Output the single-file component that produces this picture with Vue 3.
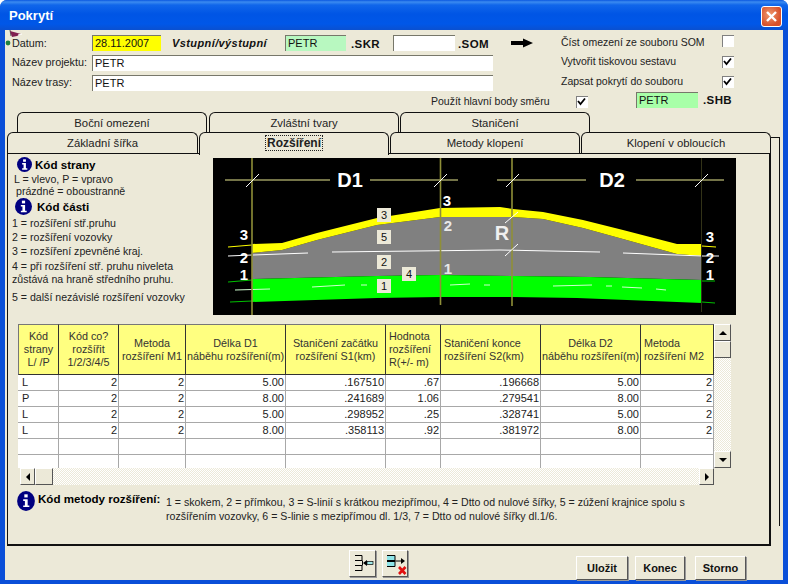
<script setup>
const headers = [
  { lines: ['Kód', 'strany', 'L/ /P'], width: 41 },
  { lines: ['Kód co?', 'rozšířit', '1/2/3/4/5'], width: 60 },
  { lines: ['Metoda', 'rozšíření M1'], width: 67 },
  { lines: ['Délka D1', 'náběhu rozšíření(m)'], width: 100 },
  { lines: ['Staničení začátku', 'rozšíření S1(km)'], width: 100 },
  { lines: ['Hodnota', 'rozšíření', 'R(+/- m)'], width: 55, left: true },
  { lines: ['Staničení konce', 'rozšíření S2(km)'], width: 100, left: true },
  { lines: ['Délka D2', 'náběhu rozšíření(m)'], width: 100 },
  { lines: ['Metoda', 'rozšíření M2'], width: 73, left: true },
]
const rows = [
  ['L', '2', '2', '5.00', '.167510', '.67', '.196668', '5.00', '2'],
  ['P', '2', '2', '8.00', '.241689', '1.06', '.279541', '8.00', '2'],
  ['L', '2', '2', '5.00', '.298952', '.25', '.328741', '5.00', '2'],
  ['L', '2', '2', '8.00', '.358113', '.92', '.381972', '8.00', '2'],
  ['', '', '', '', '', '', '', '', ''],
  ['', '', '', '', '', '', '', '', ''],
]
const tabsTop = ['Boční omezení', 'Zvláštní tvary', 'Staničení']
const tabsBottom = ['Základní šířka', 'Rozšíření', 'Metody klopení', 'Klopení v obloucích']
const markers = [
  { t: '3', x: 384, y: 215 }, { t: '5', x: 384, y: 237 }, { t: '2', x: 384, y: 262 },
  { t: '4', x: 409, y: 274 }, { t: '1', x: 384, y: 286 },
]
const nums = [
  { t: '3', x: 244, y: 240 }, { t: '2', x: 244, y: 263 }, { t: '1', x: 244, y: 280 },
  { t: '3', x: 447, y: 206 }, { t: '2', x: 448, y: 231, dim: true }, { t: '1', x: 448, y: 274, dim: true },
  { t: '3', x: 710, y: 242 }, { t: '2', x: 710, y: 263 }, { t: '1', x: 710, y: 280 },
]
const ticks = [252, 440, 512, 701]
</script>

<template>
  <div class="window">
    <div class="titlebar">
      <span class="title">Pokrytí</span>
      <span class="close">
        <svg width="19" height="19" viewBox="0 0 19 19"><path d="M5 5L14 14M14 5L5 14" stroke="#fff" stroke-width="2.4" /></svg>
      </span>
    </div>
    <div class="client">
      <svg class="flag" width="18" height="18" viewBox="0 0 18 18">
        <path d="M5 0L6 6" stroke="#555" />
        <path d="M5 1L16 4L12 6L7 7Z" fill="#802050" />
        <path d="M13 5L17 4" stroke="#fff" />
        <circle cx="3" cy="13" r="2.4" fill="#208040" />
      </svg>

      <div class="row row1">
        <span class="label lab">Datum:</span>
        <span class="field yellow w69">28.11.2007</span>
        <b class="io">Vstupní/výstupní</b>
        <span class="field green w61">PETR</span>
        <b class="ext w42">.SKR</b>
        <span class="field w62"></span>
        <b class="ext w53">.SOM</b>
        <svg class="arrow" width="22" height="10" viewBox="0 0 22 10"><path d="M0 3H12V0.5L22 5L12 9.5V7H0Z" fill="#000" /></svg>
        <span class="label opt">Číst omezení ze souboru SOM</span>
        <span class="check"></span>
      </div>
      <div class="row row2">
        <span class="label lab">Název projektu:</span>
        <span class="field w401">PETR</span>
        <span class="label opt far">Vytvořit tiskovou sestavu</span>
        <span class="check on"><svg width="9" height="9" viewBox="0 0 9 9"><path d="M1 4L3.5 7L8 1.5" fill="none" stroke="#000" stroke-width="1.8" /></svg></span>
      </div>
      <div class="row row3">
        <span class="label lab">Název trasy:</span>
        <span class="field w401">PETR</span>
        <span class="label opt far">Zapsat pokrytí do souboru</span>
        <span class="check on"><svg width="9" height="9" viewBox="0 0 9 9"><path d="M1 4L3.5 7L8 1.5" fill="none" stroke="#000" stroke-width="1.8" /></svg></span>
      </div>
      <div class="row row4">
        <span class="label main">Použít hlavní body směru</span>
        <span class="check on"><svg width="9" height="9" viewBox="0 0 9 9"><path d="M1 4L3.5 7L8 1.5" fill="none" stroke="#000" stroke-width="1.8" /></svg></span>
        <span class="field green2 w62 shb">PETR</span>
        <b class="ext shbx">.SHB</b>
      </div>

      <div class="stack">
        <div class="stack-main">
          <div class="tabs tabs-top">
            <div v-for="t in tabsTop" :key="t" class="tab">{{ t }}</div>
          </div>
          <div class="tabs tabs-bottom">
            <div v-for="t in tabsBottom" :key="t" class="tab" :class="{ active: t === 'Rozšíření' }">
              <span :class="{ focus: t === 'Rozšíření' }">{{ t }}</span>
            </div>
          </div>
          <div class="panel">
            <div class="top">
              <div class="notes">
                <div class="head h1">
                  <svg class="info" width="15" height="15" viewBox="0 0 16 16"><circle cx="8" cy="8" r="8" fill="#000080" /><rect x="6.5" y="2.5" width="3" height="2.6" fill="#fff" /><path d="M5.5 6.5H9.5V12H11V13.5H5.5V12H7V8H5.5Z" fill="#fff" /></svg>
                  <b class="ht">Kód strany</b>
                </div>
                <div class="ln l12 in2">L = vlevo, P = vpravo</div>
                <div class="ln l12 in4">prázdné = oboustranně</div>
                <div class="head h2">
                  <svg class="info" width="17" height="17" viewBox="0 0 16 16"><circle cx="8" cy="8" r="8" fill="#000080" /><rect x="6.5" y="2.5" width="3" height="2.6" fill="#fff" /><path d="M5.5 6.5H9.5V12H11V13.5H5.5V12H7V8H5.5Z" fill="#fff" /></svg>
                  <b class="ht">Kód části</b>
                </div>
                <div class="ln l14">1 = rozšíření stř.pruhu</div>
                <div class="ln l14">2 = rozšíření vozovky</div>
                <div class="ln l14">3 = rozšíření zpevněné kraj.</div>
                <div class="ln l13 mt2">4 = při rozšíření stř. pruhu niveleta</div>
                <div class="ln l13">zůstává na hraně středního pruhu.</div>
                <div class="ln l14 mt4">5 = další nezávislé rozšíření vozovky</div>
              </div>
              <svg class="drawing" width="523" height="157" viewBox="213 158 523 157">
                <rect x="213" y="158" width="523" height="157" fill="#000" />
                <path d="M252 279L377 276L440 275L513 276L590 277L702 280V256L677 254L623 239L583 228L543 219L513 217L440 217L377 225L317 240L282 250L252 253Z" fill="#808080" />
                <path d="M252 244L282 243L317 233L377 218L440 208L500 207L513 209L543 212L583 220L623 230L677 244L702 244V256L677 254L623 239L583 228L543 219L513 217L440 217L377 225L317 240L282 250L252 253Z" fill="#ffff00" />
                <path d="M252 279L377 276L440 275L513 276L590 277L702 280V303L577 298L513 297L440 297L377 298L252 302Z" fill="#00ff00" />
                <g stroke="#fff" stroke-width="1" fill="none">
                  <path d="M253 255L308 253M332 252L500 250L600 252M623 253L703 256" />
                  <path d="M235 290L270 289M312 287L345 285M361 285L367 285M450 285L470 284M484 285L490 285M553 286L592 285M606 286L612 286M622 287L642 288M656 289L666 290" stroke="#cfffcf" />
                  <path d="M228 256L252 255M703 256L719 256" />
                </g>
                <g stroke="#00c000" fill="none">
                  <path d="M228 282L252 280M702 281L715 281M230 302L252 301M702 302L715 303" />
                </g>
                <path d="M228 247L252 245M702 246L716 247" stroke="#ffff00" fill="none" />
                <g stroke="#e8e890" stroke-width="1">
                  <path d="M225 180H330M370 180H458M497 180H586M636 180H724" />
                </g>
                <g stroke="#8f8f38" stroke-width="1.6" fill="none">
                  <path d="M252 158V315M440.5 158V305M512 158V306" />
                </g>
                <path d="M701.5 158V312" stroke="#333318" />
                <g stroke="#fff" stroke-width="1">
                  <path v-for="x in ticks" :key="x" :d="`M${x - 6} 187L${x + 7} 174`" />
                  <path d="M505 223L518 212M505 256L518 244" />
                </g>
                <text x="350" y="187" class="big" text-anchor="middle">D1</text>
                <text x="612" y="187" class="big" text-anchor="middle">D2</text>
                <text x="502" y="240" class="big r" text-anchor="middle">R</text>
                <text v-for="n in nums" :key="`${n.t}${n.x}`" :x="n.x" :y="n.y" class="num" :class="{ dim: n.dim }" text-anchor="middle">{{ n.t }}</text>
                <g v-for="m in markers" :key="m.t">
                  <rect :x="m.x - 7" :y="m.y - 7" width="14" height="14" fill="#ece9d8" />
                  <text :x="m.x" :y="m.y + 4" class="mark" text-anchor="middle">{{ m.t }}</text>
                </g>
              </svg>
            </div>

            <div class="grid-wrap">
              <div class="grid-row">
                <div class="grid-clip">
                  <table class="grid">
                    <colgroup><col v-for="(h, i) in headers" :key="i" :style="{ width: h.width + 'px' }" /></colgroup>
                    <thead>
                      <tr>
                        <th v-for="(h, i) in headers" :key="i" :class="{ left: h.left }">
                          <div v-for="l in h.lines" :key="l">{{ l }}</div>
                        </th>
                      </tr>
                    </thead>
                    <tbody>
                      <tr v-for="(r, ri) in rows" :key="ri">
                        <td v-for="(c, ci) in r" :key="ci" :class="{ first: ci === 0 }">{{ c }}</td>
                      </tr>
                    </tbody>
                  </table>
                </div>
                <div class="vscroll">
                  <span class="sb-btn v"><i class="tri up"></i></span>
                  <span class="sb-btn thumb-v"></span>
                  <span class="track"></span>
                  <span class="sb-btn v"><i class="tri down"></i></span>
                </div>
              </div>
              <div class="hscroll">
                <span class="sb-btn h"><i class="tri lft"></i></span>
                <span class="sb-btn thumb-h"></span>
                <span class="track"></span>
                <span class="sb-btn h"><i class="tri rgt"></i></span>
                <span class="corner"></span>
              </div>
            </div>

            <div class="method">
              <svg class="info m" width="18" height="20" viewBox="0 0 16 18"><ellipse cx="8" cy="9" rx="8" ry="9" fill="#000080" /><rect x="6.5" y="3" width="3" height="2.8" fill="#fff" /><path d="M5.5 7.5H9.5V13H11V14.5H5.5V13H7V9H5.5Z" fill="#fff" /></svg>
              <b class="mhead">Kód metody rozšíření:</b>
              <p class="mtext">1 = skokem, 2 = přímkou, 3 = S-linií s krátkou mezipřímou, 4 = Dtto od nulové šířky, 5 = zúžení krajnice spolu s rozšířením vozovky, 6 = S-linie s mezipřímou dl. 1/3, 7 = Dtto od nulové šířky dl.1/6.</p>
            </div>
          </div>
        </div>
        <div class="strip"></div>
      </div>

      <div class="footer">
        <span class="btn ico">
          <svg width="25" height="25" viewBox="0 0 25 25" fill="none">
            <path d="M5 4.5H12V9.5H5M5 14.5H12V19.5H5" stroke="#000" />
            <path d="M12.5 9.5V14.5" stroke="#000" />
            <rect x="17" y="10.5" width="6" height="3" fill="#9fe8e8" stroke="#000" stroke-width="0.7" />
            <path d="M13 12L17 9V15Z" fill="#000" />
          </svg>
        </span>
        <span class="btn ico second-ico">
          <svg width="24" height="25" viewBox="0 0 24 25" fill="none">
            <path d="M4 4.5H12V9.5H4" fill="#8fe4e8" stroke="#000" />
            <path d="M4 10.5H12V15.5H4" fill="#8fe4e8" stroke="#000" />
            <path d="M12 10H18" stroke="#000" />
            <path d="M18 7L22 10L18 13Z" fill="#000" />
            <path d="M16 16L22.5 23M22.5 16L16 23" stroke="#e01010" stroke-width="2.6" />
          </svg>
        </span>
        <span class="btn txt b1">Uložit</span>
        <span class="btn txt b2">Konec</span>
        <span class="btn txt b3">Storno</span>
      </div>
    </div>
  </div>
</template>

<style>
html, body { margin: 0; background: #fff; }
</style>

<style scoped>
.window {
  width: 788px;
  height: 584px;
  display: flex;
  flex-direction: column;
  box-sizing: border-box;
  background: #0a4fd8;
  border-radius: 7px 7px 0 0;
  overflow: hidden;
  font: 10.8px "Liberation Sans", Arial, sans-serif;
  color: #111;
}
.titlebar {
  height: 30px;
  flex: none;
  display: flex;
  align-items: center;
  justify-content: space-between;
  padding: 0 7px 0 9px;
  background: linear-gradient(#0a58e0 0, #3b8bf0 2px, #1066ea 5px, #0055e5 14px, #0057e8 24px, #0a50d0 30px);
}
.title { color: #fff; font-weight: bold; font-size: 13px; }
.close {
  width: 19px;
  height: 19px;
  display: block;
  border: 1px solid #fff;
  margin-top: 2px;
  border-radius: 3px;
  background: radial-gradient(circle at 40% 40%, #ee9a70, #d8502a 70%);
  margin-right: -1px;
}
.close svg { display: block; }
.client {
  position: relative;
  flex: 1;
  min-height: 0;
  margin: 0 5px 4px;
  background: #ece9d8;
  box-sizing: border-box;
}
.flag { position: absolute; left: 0; top: 0; }
.row { display: flex; align-items: flex-start; padding-left: 7px; }
.row1 { height: 20px; padding-top: 5px; }
.row2 { height: 20px; }
.row3 { height: 17px; }
.row4 { height: 20px; }
.label { line-height: 14px; white-space: nowrap; color: #222; }
.lab { width: 80px; flex: none; margin-top: 1px; }
.row2 .lab, .row3 .lab { margin-top: 0; }
.field {
  box-sizing: border-box;
  height: 16px;
  line-height: 15px;
  padding-left: 2px;
  background: #fff;
  border-top: 1.5px solid #77776a;
  border-left: 1.5px solid #77776a;
  font-size: 11px;
  flex: none;
  color: #111;
}
.yellow { background: #ffff00; }
.green { background: #b8f8c0; }
.green2 { background: #a8ffa8; }
.w69 { width: 69px; }
.w61 { width: 61px; }
.w62 { width: 62px; }
.w401 { width: 401px; }
.io { width: 124px; padding-left: 11px; box-sizing: border-box; font-style: italic; font-size: 11px; letter-spacing: 0.4px; line-height: 16px; white-space: nowrap; flex: none; }
.ext { font-size: 11.5px; letter-spacing: 0.4px; line-height: 16px; padding-left: 5px; box-sizing: border-box; flex: none; margin-top: 1px; }
.w42 { width: 47px; }
.w53 { width: 56px; padding-left: 3px; }
.arrow { flex: none; margin-top: 3px; }
.opt { width: 161px; flex: none; margin-left: 28px; font-size: 10.5px; }
.far { margin-left: 68px; }
.row2 .opt, .row3 .opt { margin-top: -1px; }
.row2 .check, .row3 .check { margin-top: 1px; }
.check {
  box-sizing: border-box;
  width: 12px;
  height: 12px;
  flex: none;
  background: #fff;
  border-top: 1.5px solid #808080;
  border-left: 1.5px solid #808080;
  display: block;
}
.check svg { display: block; }
.main { width: 145px; margin-left: 419px; flex: none; margin-top: 2px; font-size: 10.5px; }
.row4 .check { margin-top: 4px; }
.shb { margin-left: 48px; }
.shbx { width: 40px; margin-top: 0; }

.stack { display: flex; align-items: flex-start; padding-left: 2px; }
.stack-main { width: 764px; flex: none; }
.strip {
  width: 9px;
  height: 389px;
  flex: none;
  margin-top: 25px;
  box-sizing: border-box;
  border-top: 1px solid #111;
  border-right: 1.5px solid #111;
}
.tabs { display: flex; }
.tabs-top { height: 20px; margin-left: 10px; gap: 1px; }
.tabs-top .tab:first-child { margin-right: 1px; }
.tabs-bottom { height: 21px; gap: 1px; }
.tabs-bottom .tab:first-child { width: 191px; }
.tab {
  box-sizing: border-box;
  width: 190px;
  flex: none;
  background: #ece9d8;
  border: 1px solid #111;
  border-bottom: none;
  border-radius: 6px 6px 0 0;
  text-align: center;
  line-height: 20px;
  font-size: 11.3px;
  color: #222;
}
.tabs-bottom .tab.active {
  height: 23px;
  position: relative;
  z-index: 1;
  font-weight: bold;
  font-size: 12px;
  line-height: 21px;
}
.focus { outline: 1px dotted #222; padding: 0 1px; }
.panel {
  box-sizing: border-box;
  height: 393px;
  background: #ece9d8;
  border: 1px solid #111;
  border-width: 1px 2px 2px 1px;
  padding: 2px 0 0 4px;
}
.top { display: flex; height: 159px; align-items: flex-start; }
.notes { width: 201px; flex: none; font-size: 10.6px; color: #222; }
.head { display: flex; align-items: center; }
.h1 { height: 17px; padding-left: 5px; }
.h2 { height: 19px; padding-left: 3px; }
.ht { font-size: 11.6px; padding-left: 3px; color: #000; }
.h2 .ht { padding-left: 5px; }
.info { flex: none; display: block; }
.ln { white-space: nowrap; }
.l12 { line-height: 12px; }
.l13 { line-height: 13px; }
.l14 { line-height: 14px; }
.in2 { padding-left: 2px; }
.in4 { padding-left: 4px; }
.mt2 { margin-top: 2px; }
.mt4 { margin-top: 4px; }
.drawing { display: block; flex: none; margin-top: 2px; }
.big { font: bold 20px "Liberation Sans", Arial, sans-serif; fill: #fff; }
.r { fill: #f0f0f0; }
.num { font: bold 15px "Liberation Sans", Arial, sans-serif; fill: #fff; }
.num.dim { fill: #e8e8e8; }
.mark { font: 11px "Liberation Sans", Arial, sans-serif; fill: #111; }

.grid-wrap { margin: 9px 0 0 6px; width: 713px; }
.grid-row { display: flex; height: 144px; }
.grid-clip {
  width: 696px;
  flex: none;
  overflow: hidden;
  background: #fff;
}
.grid { border-collapse: separate; border-spacing: 0; table-layout: fixed; width: 696px; }
.grid th {
  box-sizing: border-box;
  height: 51px;
  padding: 0 1px;
  background: #ffff80;
  font-weight: normal;
  line-height: 13px;
  text-align: center;
  white-space: nowrap;
  overflow: hidden;
  border-right: 1px solid #333;
  border-bottom: 1px solid #333;
  border-top: 1px solid #777;
  color: #333;
  font-size: 10.8px;
}
.grid th:first-child { border-left: 1px solid #777; }
.grid th.left { text-align: left; padding-left: 3px; }
.grid td {
  box-sizing: border-box;
  height: 16px;
  padding: 0 1px 0 0;
  font-size: 11px;
  line-height: 15px;
  text-align: right;
  border-right: 1px solid #a8a8a8;
  border-bottom: 1px solid #a8a8a8;
  color: #222;
  background: #fff;
}
.grid td.first { text-align: left; padding-left: 4px; }
.vscroll { width: 17px; flex: none; display: flex; flex-direction: column; background: #ece9d8; }
.hscroll { display: flex; height: 17px; padding-left: 2px; }
.sb-btn {
  box-sizing: border-box;
  display: flex;
  align-items: center;
  justify-content: center;
  background: #ece9d8;
  border: 1px solid;
  border-color: #fff #555 #555 #fff;
  flex: none;
}
.sb-btn.v { height: 17px; }
.thumb-v { height: 17px; }
.sb-btn.h { width: 15px; }
.thumb-h { width: 18px; }
.track {
  flex: 1;
  background: repeating-conic-gradient(#fff 0 25%, #ece9d8 0 50%) 0 0 / 2px 2px;
}
.corner { width: 17px; flex: none; background: #ece9d8; }
.tri { display: block; width: 0; height: 0; border: 4px solid transparent; }
.tri.up { border-bottom-color: #000; border-top-width: 0; }
.tri.down { border-top-color: #000; border-bottom-width: 0; }
.tri.lft { border-right-color: #000; border-left-width: 0; }
.tri.rgt { border-left-color: #000; border-right-width: 0; }

.method { display: flex; align-items: flex-start; margin-top: 5px; padding-left: 5px; }
.info.m { margin-top: 1px; }
.mhead { font-size: 11.6px; width: 131px; flex: none; padding-left: 3px; line-height: 16px; margin-top: 1px; box-sizing: border-box; white-space: nowrap; color: #000; }
.mtext { margin: 5px 0 0 0; width: 524px; font-size: 10.6px; line-height: 14px; color: #222; }

.footer { height: 34px; display: flex; align-items: flex-start; padding-left: 344px; }
.btn {
  box-sizing: border-box;
  flex: none;
  display: flex;
  align-items: center;
  justify-content: center;
  background: #ece9d8;
  border: 1px solid;
  border-color: #fff #555 #555 #fff;
  box-shadow: 1px 1px 0 #999;
}
.ico { width: 27px; height: 27px; margin-top: 4px; }
.second-ico { width: 26px; margin-left: 6px; }
.txt { height: 24px; margin-top: 10px; font-weight: bold; font-size: 11px; color: #111; }
.b1 { width: 52px; margin-left: 168px; }
.b2 { width: 50px; margin-left: 7px; }
.b3 { width: 51px; margin-left: 10px; }
</style>
